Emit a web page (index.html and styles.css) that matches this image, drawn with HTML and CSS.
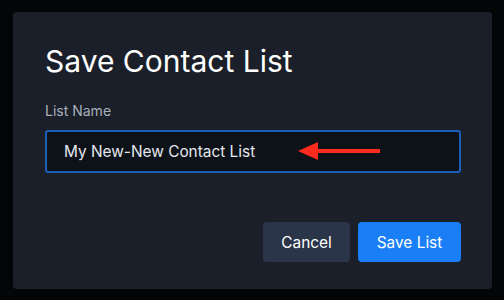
FILE: index.html
```html
<!DOCTYPE html>
<html lang="en">
<head>
  <meta charset="UTF-8" />
  <title>Save Contact List</title>
  <link rel="stylesheet" href="styles.css">
</head>
<body>
  <div class="backdrop">
    <div class="dialog">
      <h1>Save Contact List</h1>
      <label class="field-label" for="listName">List Name</label>
      <div class="input-wrap">
        <input type="text" id="listName" value="My New-New Contact List" />
        <svg class="pointer" width="84" height="20" viewBox="0 0 84 20">
          <path d="M0 10 L20 1 L20 8 L82 8 L82 12 L20 12 L20 19 Z" fill="#ff2b1f" />
        </svg>
      </div>
      <div class="actions">
        <button class="btn btn-cancel">Cancel</button>
        <button class="btn btn-save">Save List</button>
      </div>
    </div>
  </div>
</body>
</html>
```

FILE: styles.css
```css
html, body {
  margin: 0;
  background-color: #040506;
  font-family: 'Inter', 'Noto Sans', sans-serif;
}

.backdrop {
  padding: 12px 12px 11px 13px;
}

.dialog {
  width: 479px;
  height: 277px;
  box-sizing: border-box;
  background-color: #1a1f29;
  border-radius: 4px;
  padding: 31px 31px 27px 32px;
  display: flex;
  flex-direction: column;
}

h1 {
  margin: 0;
  font-size: 30px;
  font-weight: 400;
  line-height: 36px;
  color: #ffffff;
}

.field-label {
  margin-top: 22px;
  font-size: 14px;
  line-height: 20px;
  color: #a9b0bc;
}

.input-wrap {
  position: relative;
  margin-top: 9px;
}

input[type="text"] {
  width: 100%;
  height: 43px;
  box-sizing: border-box;
  padding: 0 17px;
  font-family: inherit;
  font-size: 15.4px;
  color: #e4e8ee;
  background-color: #0d1118;
  border: 2px solid #1a5fb8;
  border-radius: 3px;
  outline: none;
}

.pointer {
  position: absolute;
  left: 253px;
  top: 11px;
}

.actions {
  margin-top: auto;
  display: flex;
  justify-content: flex-end;
  gap: 8px;
}

.btn {
  height: 40px;
  border: none;
  border-radius: 4px;
  font-family: inherit;
  font-size: 15.4px;
  color: #ffffff;
  padding: 0;
  white-space: nowrap;
  cursor: pointer;
}

.btn-cancel {
  width: 87px;
  background-color: #2b3549;
}

.btn-save {
  width: 103px;
  background-color: #1a7ff7;
}
```
